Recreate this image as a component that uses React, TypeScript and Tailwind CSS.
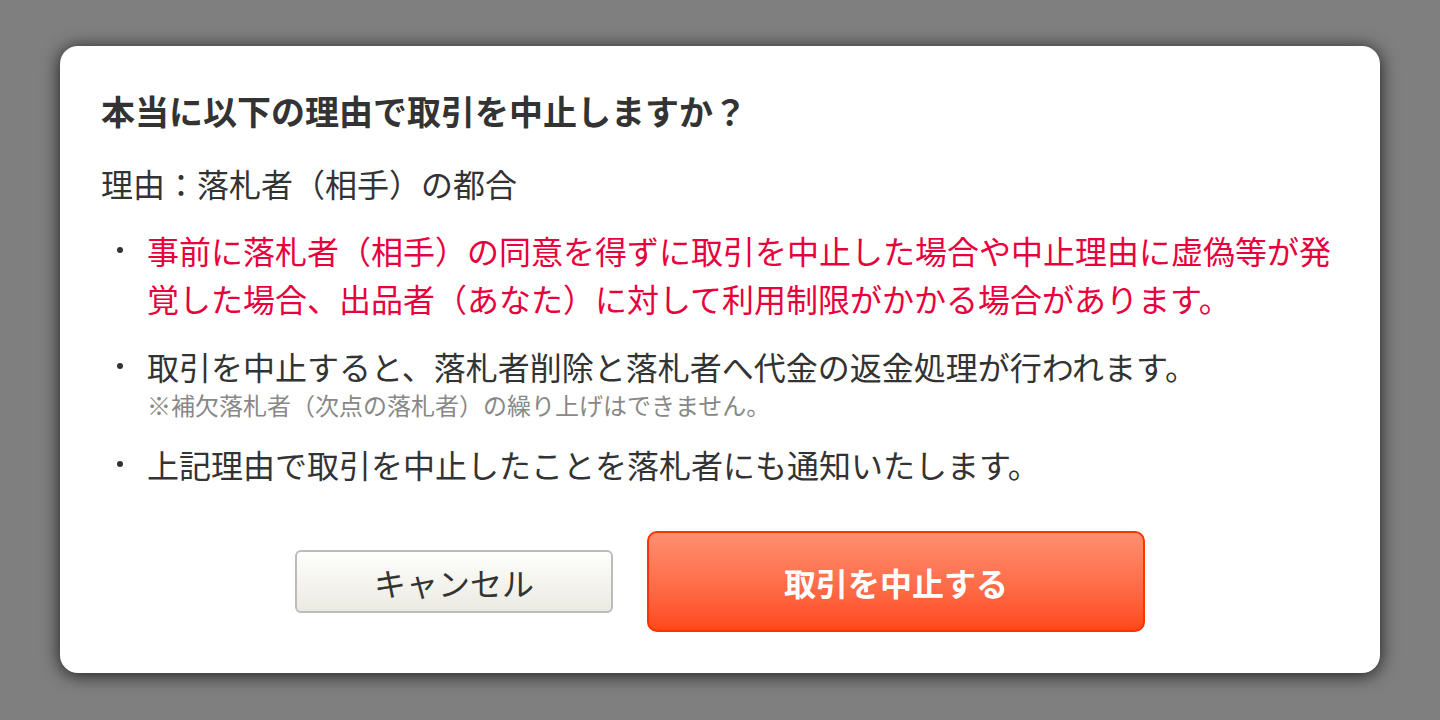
export default function App() {
  return (
    <div
      className="w-full h-[720px] bg-[#7f7f7f] pt-[46px] px-[60px]"
      style={{ fontFamily: '"Noto Sans CJK JP", "Noto Sans", sans-serif' }}
    >
      <div className="bg-white rounded-[18px] shadow-[0_2px_18px_rgba(0,0,0,0.8)] pt-[41px] pb-[41px] px-[41px] text-[#333]">
        <h1 className="text-[34px] leading-[48px] font-bold">
          本当に以下の理由で取引を中止しますか？
        </h1>
        <p className="mt-[24px] text-[32px] leading-[48px]">理由：落札者（相手）の都合</p>

        <ul className="mt-[19px] flex flex-col gap-[20px]">
          <li className="flex">
            <span className="w-[46px] h-[48px] flex items-center shrink-0">
              <span className="ml-[16px] w-[6px] h-[6px] rounded-full bg-[#333]" />
            </span>
            <span className="text-[32px] leading-[48px] text-[#e8003d] whitespace-nowrap">
              事前に落札者（相手）の同意を得ずに取引を中止した場合や中止理由に虚偽等が発
              <br />
              覚した場合、出品者（あなた）に対して利用制限がかかる場合があります。
            </span>
          </li>
          <li className="flex">
            <span className="w-[46px] h-[48px] flex items-center shrink-0">
              <span className="ml-[16px] w-[6px] h-[6px] rounded-full bg-[#333]" />
            </span>
            <div>
              <p className="text-[32px] leading-[48px]">
                取引を中止すると、落札者削除と落札者へ代金の返金処理が行われます。
              </p>
              <p className="text-[24px] leading-[30px] text-[#888]">
                ※補欠落札者（次点の落札者）の繰り上げはできません。
              </p>
            </div>
          </li>
          <li className="flex">
            <span className="w-[46px] h-[48px] flex items-center shrink-0">
              <span className="ml-[16px] w-[6px] h-[6px] rounded-full bg-[#333]" />
            </span>
            <p className="text-[32px] leading-[48px]">
              上記理由で取引を中止したことを落札者にも通知いたします。
            </p>
          </li>
        </ul>

        <div className="mt-[43px] flex items-center justify-center gap-[34px]">
          <button className="w-[318px] h-[63px] rounded-[6px] border-2 border-[#bcbcbc] bg-gradient-to-b from-[#fefefc] to-[#ebeae2] text-[32px] text-[#333]">
            キャンセル
          </button>
          <button className="w-[498px] h-[101px] rounded-[10px] border-2 border-[#ff3300] bg-gradient-to-b from-[#ff8e70] to-[#ff4819] text-[32px] font-bold text-white">
            取引を中止する
          </button>
        </div>
      </div>
    </div>
  )
}
